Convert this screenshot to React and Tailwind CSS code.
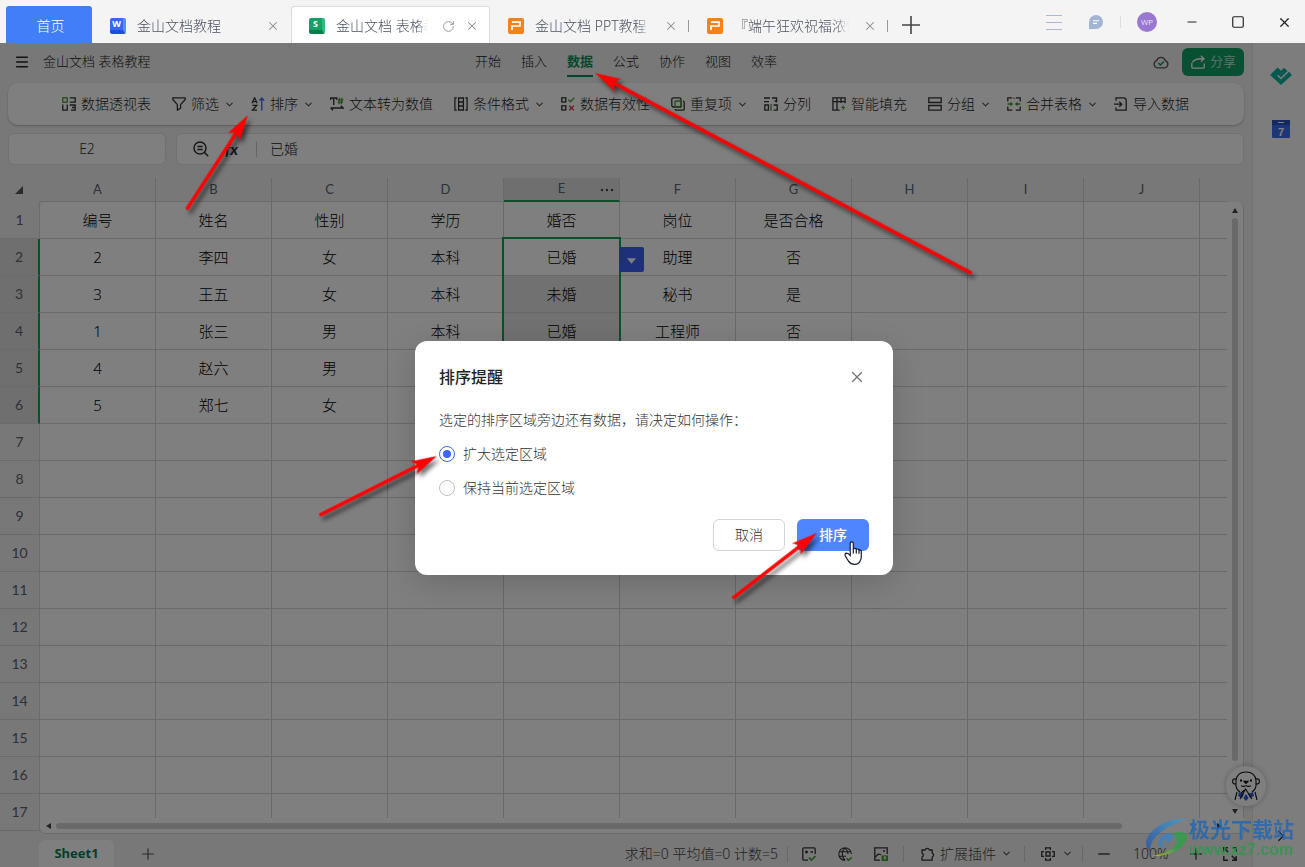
import React from "react";
import { Menu, X, Plus, ChevronDown, ChevronRight, RotateCw, Minus, Square } from "lucide-react";

const G = "#4a9b2c";

function Svg({ children, className = "size-[14px]", box = "0 0 14 14", sw = 1.3 }) {
  return (
    <svg viewBox={box} className={"shrink-0 " + className} fill="none" stroke="#333" strokeWidth={sw} aria-hidden="true">
      {children}
    </svg>
  );
}

const icons = {
  pivot: (
    <>
      <rect x="0.8" y="0.8" width="4.4" height="4.4" stroke={G} />
      <path d="M7.8 .8h5.4v4.4H7.8M.8 7.5v5.7h4.4V7.5M7.8 8h5.4v5.2H9M10 10.5h3" />
    </>
  ),
  filter: <path d="M.8 .9h12.4v1.6L8.6 7.6v3.7l-3.2 1.9V7.6L.8 2.5z" strokeLinejoin="round" />,
  sort: (
    <>
      <path d="M1 6.2 3.6.8 6.2 6.2M1.8 4.6h3.6M1.4 8.4h4.4l-4.4 4.8h4.6" />
      <path d="M10.8 13.5V1.2M8.4 3.6 10.8 1l2.4 2.6" stroke="#3a62e8" />
    </>
  ),
  convert: (
    <>
      <path d="M.6 3V1h6.2v2M3.7 1v7M.5 11h12.8l-2.6-2.2M3 13.2 .8 11" />
      <path d="M9.6.8 9 7.2M12 .8l-.6 6.4M8 2.8h5.4M7.6 5.2H13" stroke={G} />
    </>
  ),
  cond: <path d="M2.8.8H.9v12.4h1.9M11.2.8h1.9v12.4h-1.9M4.6 1h4.8v12H4.6zM4.6 5h4.8M4.6 9h4.8" />,
  valid: (
    <>
      <rect x="0.8" y="0.8" width="4" height="4.2" />
      <rect x="0.8" y="8.8" width="4" height="4.2" />
      <path d="M7.4 2.8l2 2L13.4.6" stroke={G} />
      <path d="M8.2 8.8l4.6 4.4M12.8 8.8l-4.6 4.4" stroke="#d9344a" />
    </>
  ),
  dup: (
    <>
      <rect x="0.8" y="0.8" width="9.2" height="9.2" rx="1.6" />
      <path d="M12 4.2h.2q1 0 1 1v7q0 1-1 1h-7q-1 0-1-1V12" />
      <rect x="4" y="4" width="6.4" height="6.4" rx="1" stroke={G} />
    </>
  ),
  split: (
    <>
      <path d="M0 1h6M8 1h4.6v4M10.6 3.4l2 2M0 4.6h5M.8 13.2V8h3.6v5.2zM9.6 8h3.6v5.2H9.6" />
      <path d="M7 7v7" stroke={G} />
    </>
  ),
  fill: (
    <>
      <path d="M7.6 13.2H.9V.9h12.2v5.4M.9 4.6h12.2M5 .9v12.3M9 .9v5" />
      <path d="M11.6 7.4 9 11h2l-.8 3 3.2-4h-2z" fill={G} stroke="none" />
    </>
  ),
  group: <path d="M.8.9h12.4v4.6H.8zM.8 8.5h12.4v4.6H.8z" />,
  merge: (
    <>
      <path d="M.8 4.4V.8h4.4M8.8.8h4.4v3.6M.8 9.6v3.6h4.4M8.8 13.2h4.4V9.6M7 .8v1" />
      <path d="M.6 7H5M3.4 5.4 5.2 7 3.4 8.6M13.4 7H9M10.6 5.4 8.8 7l1.8 1.6" stroke={G} />
    </>
  ),
  import: <path d="M2 3.8V.9h7.4q2.8 0 2.8 2.8v9.4H2v-2.6M0 7.2h7.4M5.2 4.6 7.8 7.2 5.2 9.8" />,
};

const tools = [
  ["pivot", "数据透视表"],
  ["filter", "筛选", true],
  ["sort", "排序", true],
  ["convert", "文本转为数值"],
  ["cond", "条件格式", true],
  ["valid", "数据有效性"],
  ["dup", "重复项", true],
  ["split", "分列"],
  ["fill", "智能填充"],
  ["group", "分组", true],
  ["merge", "合并表格", true],
  ["import", "导入数据"],
];

const columns = ["A", "B", "C", "D", "E", "F", "G", "H", "I", "J"];
const data = [
  ["编号", "姓名", "性别", "学历", "婚否", "岗位", "是否合格"],
  ["2", "李四", "女", "本科", "已婚", "助理", "否"],
  ["3", "王五", "女", "本科", "未婚", "秘书", "是"],
  ["1", "张三", "男", "本科", "已婚", "工程师", "否"],
  ["4", "赵六", "男"],
  ["5", "郑七", "女"],
];
const rows = Array.from({ length: 17 }, (_, i) => i);

function AppIcon({ kind }) {
  if (kind === "P")
    return (
      <svg viewBox="0 0 16 16" className="size-4 shrink-0" aria-hidden="true">
        <rect width="16" height="16" rx="2" fill="#f6821a" />
        <path d="M4 12V8h8V4.2H4" fill="none" stroke="#fff" strokeWidth="1.7" />
      </svg>
    );
  const word = kind === "W";
  return (
    <span
      className={
        "flex size-4 shrink-0 items-start justify-center rounded-[2px] border-r-[3px] border-b-4 text-[9px] leading-[12px] font-bold text-white " +
        (word ? "border-r-[#5d8cff] border-b-[#1c50e0] bg-[#3a66f5]" : "border-r-[#2dbb7c] border-b-[#0a7d4b] bg-[#10a264]")
      }
    >
      {kind}
    </span>
  );
}

function Tab({ kind, title, active, separator }) {
  return (
    <div
      className={
        "relative flex h-[37px] w-[199px] shrink-0 items-center pt-[3px] pr-[11px] pl-[18px] " +
        (active ? "rounded-t-[3px] bg-white shadow-[inset_1px_1px_0_#dcdcdc,inset_-1px_0_0_#dcdcdc]" : "")
      }
    >
      <AppIcon kind={kind} />
      <span className="ml-[11px] flex-1 overflow-hidden text-sm whitespace-nowrap text-[#4a5263] [mask-image:linear-gradient(to_right,black_88%,transparent)]">
        {title}
      </span>
      {active && (
        <button aria-label="刷新" className="ml-[14px]">
          <RotateCw className="size-[13px] text-[#999]" strokeWidth={1.8} />
        </button>
      )}
      <button aria-label="关闭标签" className={active ? "ml-[10px]" : "ml-[14px]"}>
        <X className="size-[14px] text-[#8c8c8c]" strokeWidth={1.8} />
      </button>
      {separator && <span className="absolute right-0 h-3 w-px bg-[#999]" />}
    </div>
  );
}

function TabBar() {
  return (
    <header className="flex h-[43px] shrink-0 items-end bg-[#f4f4f4] pl-1.5">
      <button className="h-[37px] w-[86px] rounded-t-[3px] bg-[#417ff9] pt-[3px] pl-[3px] text-sm text-white">首页</button>
      <Tab kind="W" title="金山文档教程" />
      <Tab kind="S" title="金山文档 表格教程" active />
      <Tab kind="P" title="金山文档 PPT教程" separator />
      <Tab kind="P" title="『端午狂欢祝福浓情" separator />
      <button aria-label="新建标签" className="flex h-[37px] w-[46px] items-center justify-center pt-px">
        <svg viewBox="0 0 18 18" className="size-[18px]" stroke="#444" strokeWidth="1.6" aria-hidden="true">
          <path d="M9 0v18M0 9h18" />
        </svg>
      </button>
      <div className="ml-auto flex h-[43px] items-center pt-px pr-[13px]">
        <button aria-label="列表" className="flex w-4 flex-col gap-[6px]">
          <span className="h-px w-4 bg-[#a9bad4]" />
          <span className="h-px w-4 bg-[#a9bad4]" />
          <span className="h-px w-4 bg-[#a9bad4]" />
        </button>
        <button aria-label="消息" className="ml-[27px]">
          <svg viewBox="0 0 14 14" className="size-[14px]" aria-hidden="true">
            <path d="M0 14V7a7 7 0 1 1 7 7z" fill="#a2b5d2" />
            <path d="M4 5.8h6M4 8.4h4" stroke="#fff" strokeWidth="1.1" />
          </svg>
        </button>
        <span className="ml-[17px] h-3 w-px bg-[#ddd]" />
        <span className="ml-4 flex size-5 items-center justify-center rounded-full bg-[#9a77d1] text-[8px] text-white">WP</span>
        <button aria-label="最小化" className="ml-[28px]">
          <Minus className="size-[14px] text-[#222]" strokeWidth={1.8} />
        </button>
        <button aria-label="最大化" className="ml-8">
          <Square className="size-[14px] text-[#222]" strokeWidth={2} />
        </button>
        <button aria-label="关闭" className="ml-8">
          <X className="size-[15px] text-[#222]" strokeWidth={1.9} />
        </button>
      </div>
    </header>
  );
}

function MenuBar() {
  return (
    <div className="grid h-10 shrink-0 grid-cols-[1fr_auto_1fr] items-center px-2 pb-[2px] text-[13px] text-[#222]">
      <div className="flex items-center gap-[13px] pl-1.5">
        <button aria-label="菜单">
          <Menu className="size-4" strokeWidth={2.2} />
        </button>
        <span>金山文档 表格教程</span>
      </div>
      <nav className="flex gap-5">
        {["开始", "插入", "数据", "公式", "协作", "视图", "效率"].map((m) => (
          <button
            key={m}
            className={
              "h-[30px] border-b-2 leading-5 " +
              (m === "数据" ? "border-[#0a8f5a] font-bold text-[#0a8f5a]" : "border-transparent")
            }
          >
            {m}
          </button>
        ))}
      </nav>
      <div className="flex items-center justify-end gap-[13px]">
        <svg viewBox="0 0 16 14" className="h-[14px] w-4" fill="none" aria-hidden="true">
          <path d="M4.5 12.8a3.7 3.7 0 0 1-.8-7.2 4.5 4.5 0 0 1 8.6 0 3.7 3.7 0 0 1-.8 7.2z" stroke="#555" strokeWidth="1.3" />
          <path d="M5.4 8l2 2 3.4-3.6" stroke="#0a8f5a" strokeWidth="1.5" />
        </svg>
        <button className="flex h-7 items-center gap-[5px] rounded-md bg-[#12a066] pr-2 pl-[9px] text-[13px] text-white">
          <svg viewBox="0 0 14 14" className="size-[14px]" fill="none" stroke="#fff" strokeWidth="1.3" aria-hidden="true">
            <path d="M.8 8v4q0 1.2 1.2 1.2h10q1.2 0 1.2-1.2V8.6M1.4 7.6Q3 3.4 12.6 3.8M9.8.8l3.2 3-3.2 3" />
          </svg>
          分享
        </button>
      </div>
    </div>
  );
}

function Toolbar() {
  return (
    <div className="mx-2 flex h-[42px] shrink-0 items-center gap-[21px] overflow-hidden rounded-[10px] bg-white pl-[54px] text-sm text-[#222] shadow-[0_1px_2px_rgba(0,0,0,0.25)]">
      {tools.map(([icon, label, more]) => (
        <button key={label} className="flex shrink-0 items-center whitespace-nowrap">
          <Svg>{icons[icon]}</Svg>
          <span className="ml-[5px]">{label}</span>
          {more && (
            <span className="-mr-[9px] flex w-5 justify-center">
              <ChevronDown className="size-[11px] text-[#555]" strokeWidth={2.6} />
            </span>
          )}
        </button>
      ))}
    </div>
  );
}

function FormulaBar() {
  return (
    <div className="mx-2 mt-2 flex h-8 shrink-0 gap-2.5">
      <input
        aria-label="单元格"
        defaultValue="E2"
        className="w-[158px] rounded-md border border-[#e2e2e2] bg-white text-center text-sm font-light text-[#333]"
      />
      <div className="flex flex-1 items-center rounded-md border border-[#e2e2e2] bg-white pl-4 text-sm text-[#222]">
        <svg viewBox="0 0 16 16" className="size-4" fill="none" stroke="#333" strokeWidth="1.5" aria-hidden="true">
          <circle cx="7" cy="7" r="6" />
          <path d="M4.4 5.6h5.2M4.4 8.4h5.2M11.4 11.4l3.8 3.8" />
        </svg>
        <span className="ml-4 w-4 font-[Lato] text-[16px] font-bold text-[#333] italic">fx</span>
        <span className="ml-[15px] h-4 w-px bg-[#ccc]" />
        <input aria-label="公式" defaultValue="已婚" className="ml-[13px] flex-1 bg-transparent font-light" />
      </div>
    </div>
  );
}

function Sheet() {
  return (
    <div className="relative mt-[13px] mr-2 min-h-0 flex-1 overflow-hidden pr-[17px]">
      <table className="w-full table-fixed border-separate border-spacing-0">
        <colgroup>
          <col className="w-10" />
          {columns.map((c) => (
            <col key={c} className="w-[116px]" />
          ))}
          <col />
        </colgroup>
        <thead>
          <tr className="h-6 font-[Lato] text-[13px] text-[#5b6270]">
            <th className="border-b border-transparent p-0">
              <svg viewBox="0 0 8 8" className="ml-[15px] size-2" fill="#555" aria-hidden="true">
                <path d="M8 0v8H0z" />
              </svg>
            </th>
            {columns.map((c) => (
              <th
                key={c}
                scope="col"
                className={
                  "border-r border-r-[#d2d2d2] p-0 font-normal " +
                  (c === "E" ? "relative border-b-2 border-b-[#12a354] bg-[#dfdfdf]" : "border-b border-b-[#d6d6d6]")
                }
              >
                {c}
                {c === "E" && (
                  <svg viewBox="0 0 14 4" className="absolute top-[10px] right-[5px] h-1 w-[14px]" fill="#444" aria-hidden="true">
                    <circle cx="2" cy="2" r="1.2" />
                    <circle cx="7" cy="2" r="1.2" />
                    <circle cx="12" cy="2" r="1.2" />
                  </svg>
                )}
              </th>
            ))}
            <th className="border-b border-[#d6d6d6] p-0" />
          </tr>
        </thead>
        <tbody>
          {rows.map((r) => {
            const sel = r > 0 && r < 6;
            return (
              <tr key={r} className="h-[37px]">
                <th
                  scope="row"
                  className={
                    "border-b border-b-[#d6d6d6] p-0 font-[Lato] text-sm font-normal text-[#5b6270] " +
                    (sel ? "border-r-2 border-r-[#12a354] bg-[#dfdfdf]" : "border-r border-r-[#d6d6d6]")
                  }
                >
                  {r + 1}
                </th>
                {columns.map((c, i) => (
                  <td
                    key={c}
                    className={
                      "border-r border-b border-[#d2d2d2] p-0 text-center text-[15px] text-black " +
                      (i === 4 && r > 1 && r < 6 ? "bg-[#e2e2e2] " : "bg-white ") +
                      (i === 4 && r === 1 ? "relative " : "") +
                      (i === 0 && r === 0 ? "rounded-tl-md" : "")
                    }
                  >
                    {data[r] ? data[r][i] : null}
                    {i === 4 && r === 1 && (
                      <>
                        <span className="pointer-events-none absolute -top-0.5 -left-0.5 h-[188px] w-[119px] border-2 border-[#12a354]" />
                        <button
                          aria-label="选择列表"
                          className="absolute top-2 left-[115px] z-10 flex size-[25px] items-center justify-center rounded-[2px] bg-[#3c60f2]"
                        >
                          <svg viewBox="0 0 10 6" className="mt-0.5 h-[6px] w-[9px]" fill="#fff" aria-hidden="true">
                            <path d="M0 0h10L5 6z" />
                          </svg>
                        </button>
                      </>
                    )}
                  </td>
                ))}
                <td className="border-b border-[#d2d2d2] bg-white p-0" />
              </tr>
            );
          })}
        </tbody>
      </table>
      <div className="absolute top-6 right-0 bottom-0 flex w-[17px] flex-col items-center rounded-tr-md border-r border-[#d6d6d6] bg-white pt-1.5 pb-5">
        <svg viewBox="0 0 6 5" className="h-[5px] w-[6px]" fill="#444" aria-hidden="true">
          <path d="M3 0l3 5H0z" />
        </svg>
        <span className="mt-[5px] mb-12 w-[6px] flex-1 rounded-full bg-[#d2d2d2]" />
        <svg viewBox="0 0 6 5" className="h-[5px] w-[6px]" fill="#444" aria-hidden="true">
          <path d="M0 0h6L3 5z" />
        </svg>
      </div>
      <div className="absolute right-0 bottom-0 left-10 flex h-4 items-center rounded-b-md border-b border-[#d6d6d6] bg-white pr-[22px] pl-[6px]">
        <svg viewBox="0 0 5 6" className="h-[6px] w-[5px]" fill="#444" aria-hidden="true">
          <path d="M5 0v6L0 3z" />
        </svg>
        <span className="mr-[95px] ml-[5px] h-[6px] flex-1 rounded-full bg-[#d2d2d2]" />
        <svg viewBox="0 0 5 6" className="h-[6px] w-[5px]" fill="#444" aria-hidden="true">
          <path d="M0 0v6l5-3z" />
        </svg>
      </div>
    </div>
  );
}

function StatusBar() {
  return (
    <footer className="flex h-[33px] shrink-0 items-center pt-[6px] pr-[15px] pl-[39px] text-sm text-[#444]">
      <button className="h-full w-[75px] rounded-t-md bg-white font-['Noto_Sans'] text-[13px] font-bold text-[#0a7d50]">Sheet1</button>
      <button aria-label="新建工作表" className="ml-[25px]">
        <Plus className="size-[18px] text-[#555]" strokeWidth={1.6} />
      </button>
      <div className="ml-auto flex items-center">
        <span>求和=0 平均值=0 计数=5</span>
        <span className="ml-[9px] h-4 w-px bg-[#d0d0d0]" />
        <button aria-label="公式检查" className="ml-[14px]">
          <Svg>
            <path d="M6 13.2H2q-1.2 0-1.2-1.2V2Q.8.8 2 .8h10q1.2 0 1.2 1.2v5M3 5h3M4.5 3.5v3M8.5 5H11" />
            <path d="M7 10.6l2.4 2.4 4.2-4" stroke={G} strokeWidth="1.7" />
          </Svg>
        </button>
        <button aria-label="网络" className="ml-[22px]">
          <Svg sw={1.1}>
            <path d="M7 13.4A6.3 6.3 0 1 1 13.4 7M7 13.4C3.4 9.8 3.4 4.2 7 .8c2.2 2 3 4 3 6.2M1.2 4.8h11.6M1.2 9.2H8" />
            <path d="M8.6 11.4l2 2 3.2-3.2" stroke={G} strokeWidth="1.5" />
          </Svg>
        </button>
        <button aria-label="图片" className="ml-[22px]">
          <Svg>
            <path d="M6 13.2H.8V.8h12.4V7M1 10.4 4 7.2l3 .4M9 4h2" />
            <rect x="7.6" y="8.4" width="6.4" height="5.6" fill={G} stroke="none" />
            <path d="M10 9.6h1.6v1h-1.6v1h1.6v1" stroke="#fff" strokeWidth=".8" />
          </Svg>
        </button>
        <span className="ml-[15px] h-4 w-px bg-[#d0d0d0]" />
        <button className="ml-[17px] flex items-center gap-[5px]">
          <Svg>
            <path
              d="M1 3h3.2a2.2 2.2 0 0 1 4.2 0h2.8v3.2a2 2 0 0 1 0 3.8v3.2H1V10a2 2 0 0 0 0-3.8z"
              strokeLinejoin="round"
            />
          </Svg>
          扩展插件
          <ChevronDown className="size-[11px] text-[#555]" strokeWidth={2.4} />
        </button>
        <span className="ml-[12px] h-4 w-px bg-[#d0d0d0]" />
        <button aria-label="阅读模式" className="ml-4 flex items-center gap-[7px]">
          <Svg>
            <path d="M4.6 3V.8h4.8V3M4.6 11v2.2h4.8V11M3 4.6H.8v4.8H3M11 4.6h2.2v4.8H11M5 5h4v4H5z" />
          </Svg>
          <ChevronDown className="size-[11px] text-[#555]" strokeWidth={2.4} />
        </button>
        <span className="ml-[9px] h-4 w-px bg-[#d0d0d0]" />
        <button aria-label="缩小" className="ml-3">
          <Minus className="size-[18px] text-[#444]" strokeWidth={1.8} />
        </button>
        <span className="ml-5 w-[34px] text-center">100%</span>
        <button aria-label="放大" className="ml-5">
          <Plus className="size-[18px] text-[#444]" strokeWidth={1.8} />
        </button>
        <button aria-label="全屏" className="ml-[18px]">
          <Svg sw={1.5}>
            <path d="M.8 5V.8H5M9 .8h4.2V5M.8 9v4.2H5M9 13.2h4.2V9M1.4 1.4l3.8 3.8M12.6 12.6 8.8 8.8" />
          </Svg>
        </button>
      </div>
    </footer>
  );
}

function SidePanel() {
  return (
    <aside className="flex w-[53px] shrink-0 flex-col items-center border-l border-[#e2e2e2] bg-[#fbfbfb] pt-6 pl-1">
      <svg viewBox="0 0 22 18" className="h-[18px] w-[22px]" aria-hidden="true">
        <path d="M0 8 7.6.4 11 3.8 14 .8 17.6 4 11 10.6 8.2 7.8l-1 1 3.8 3.8L19 4.8 22 8 11 18z" fill="#0fb2a0" />
      </svg>
      <svg viewBox="0 0 18 18" className="mt-[35px] size-[18px]" aria-hidden="true">
        <rect width="18" height="18" rx="1" fill="#3b6cf2" />
        <rect width="18" height="5" fill="#2c50b8" />
        <path d="M6 2.5h6" stroke="#fff" strokeWidth="1" />
        <text x="9" y="15.6" textAnchor="middle" fontFamily="Liberation Sans" fontSize="11" fontWeight="700" fill="#fff">7</text>
      </svg>
      <button aria-label="展开" className="mt-auto mb-[22px]">
        <ChevronRight className="size-[18px] text-[#333]" strokeWidth={1.8} />
      </button>
    </aside>
  );
}

function Helper() {
  return (
    <div className="absolute right-[39px] bottom-[61px] flex size-10 items-center justify-center rounded-full bg-white shadow-[0_0_6px_rgba(0,0,0,0.25)]">
      <svg viewBox="0 0 30 30" className="size-[30px]" fill="none" stroke="#111" strokeWidth="1.1" aria-hidden="true">
        <path d="M5 15V9.5Q6 1 15 1t10 8.5V15q-.6 4-4 6M5 15q.6 4 4 6M5 8q-3.4-.6-3.4 2.4T5 13M25 8q3.4-.6 3.4 2.4T25 13" />
        <path d="M9 9.4h2M19 9.4h2" strokeWidth="2" />
        <path d="M13 10.4h4L15 12.4z" fill="#111" />
        <path d="M10 14.6q2.5 1.6 5 0 2.5 1.6 5 0" />
        <path d="M8 21l5 2-2 4-4-2zM22 21l-5 2 2 4 4-2zM15 23l2.6 4L15 30l-2.6-3z" fill="#2c5fd8" stroke="none" />
        <path d="M6 21 4 29M24 21l2 8M9 28l5.6-10L21 28M15 18l-5 4" />
      </svg>
    </div>
  );
}

function Dialog() {
  return (
    <div className="absolute inset-0 z-20 flex items-center justify-center bg-black/50 pt-[6px] pl-[3px]">
      <div
        role="dialog"
        aria-labelledby="dialog-title"
        className="w-[478px] rounded-xl bg-white px-6 pt-6 pb-6 text-sm text-[#333] shadow-[0_8px_32px_rgba(0,0,0,0.16)]"
      >
        <div className="flex h-6 items-center justify-between pr-[3px]">
          <h2 id="dialog-title" className="text-base font-medium text-[#222]">
            排序提醒
          </h2>
          <button aria-label="关闭对话框">
            <X className="size-[18px] text-[#777]" strokeWidth={1.8} />
          </button>
        </div>
        <p className="mt-[21px] leading-5">选定的排序区域旁边还有数据，请决定如何操作：</p>
        {["扩大选定区域", "保持当前选定区域"].map((t, i) => (
          <label key={t} className="mt-[14px] flex h-5 items-center gap-2">
            <input
              type="radio"
              name="range"
              defaultChecked={i === 0}
              className="size-4 appearance-none rounded-full border border-[#bfbfbf] bg-clip-content p-[3px] checked:border-[#3c66ff] checked:bg-[#3c66ff]"
            />
            {t}
          </label>
        ))}
        <div className="mt-[21px] flex justify-end gap-3">
          <button className="h-8 w-[72px] rounded-md border border-[#d4d4d4] bg-white">取消</button>
          <button className="h-8 w-[72px] rounded-md bg-[#4f86ff] font-medium text-white">排序</button>
        </div>
      </div>
    </div>
  );
}

function Arrow({ from, to }) {
  const [x1, y1] = from;
  const [x2, y2] = to;
  const len = Math.hypot(x2 - x1, y2 - y1);
  const angle = (Math.atan2(y2 - y1, x2 - x1) * 180) / Math.PI;
  const d = `M0 -1.7H${len - 22}L${len - 26} -7L${len} 0L${len - 26} 7L${len - 22} 1.7H0Q-1.5 0 0 -1.7z`;
  return <path d={d} transform={`translate(${x1} ${y1}) rotate(${angle})`} fill="#ff0000" />;
}

function Annotations() {
  return (
    <svg className="pointer-events-none absolute top-0 left-0 z-30 h-[867px] w-[1305px]" viewBox="0 0 1305 867" aria-hidden="true">
      <g className="drop-shadow-[3px_4px_2px_rgba(0,0,0,0.55)]">
        <Arrow from={[187, 209]} to={[248, 115]} />
        <Arrow from={[971, 273]} to={[595, 73]} />
        <Arrow from={[320, 515]} to={[437, 456]} />
        <Arrow from={[733, 598]} to={[817, 533]} />
      </g>
      <path
        d="M850.2 555.5V543.6q0-1.7 1.5-1.7t1.6 1.7v5.2q2.4-1 3 .4 2.2-.6 2.6.8 2.4-.4 2.4 1.8v4.6q0 3-1.2 4.6-1.4 3.4-5.4 3.4-4 0-6-3-2.4-3.6-3.6-6-.4-2 1.4-2.2 1.8.2 3.7 2.3zM853.3 549v4.4M856.3 549.4v4M859 550.4v3.4"
        fill="#fff"
        stroke="#111a30"
        strokeWidth="1.2"
      />
    </svg>
  );
}

function Watermark() {
  return (
    <div className="pointer-events-none absolute right-[11px] bottom-2 z-30 flex items-center gap-px opacity-80">
      <svg viewBox="0 0 42 40" className="h-10 w-[42px]" aria-hidden="true">
        <defs>
          <linearGradient id="wb" x1="0" y1="1" x2="1" y2="0">
            <stop offset="0" stopColor="#2654a4" />
            <stop offset="1" stopColor="#3f9fd4" />
          </linearGradient>
          <linearGradient id="wg" x1="0" y1="1" x2="1" y2="0">
            <stop offset="0" stopColor="#c8c81e" />
            <stop offset="0.5" stopColor="#2fa04a" />
            <stop offset="1" stopColor="#2fa04a" />
          </linearGradient>
        </defs>
        <path d="M42 1C22-1 1 12 0 25q0 6 4 9-1-11 11-20Q26 5 42 1z" fill="url(#wb)" />
        <path d="M13 28q-2-10 9-13 8 1 4 6-3 5-8 4 3-1 4-4-6 1-6 5 0 3 5 3-5 2-8-1z" fill="#3a82c4" />
        <path d="M26 15q12-3 15 2 1 9-11 16-12 6-24 5 16-3 23-10 5-7-3-13z" fill="url(#wg)" />
      </svg>
      <div className="flex flex-col">
        <span className="text-[21px] leading-6 font-bold text-[#2166b4]">极光下载站</span>
        <span className="font-['Liberation_Sans'] text-[16px] leading-[18px] font-bold text-[#2c9a4a]">www.xz7.com</span>
      </div>
    </div>
  );
}

export default function App() {
  return (
    <div className="relative flex h-screen flex-col overflow-hidden bg-[#f0f0f0] font-['Noto_Sans','Noto_Sans_CJK_SC',sans-serif] font-light">
      <TabBar />
      <div className="relative flex min-h-0 flex-1">
        <main className="flex min-w-0 flex-1 flex-col">
          <MenuBar />
          <Toolbar />
          <FormulaBar />
          <Sheet />
          <StatusBar />
        </main>
        <SidePanel />
        <Helper />
        <Dialog />
      </div>
      <Annotations />
      <Watermark />
    </div>
  );
}
